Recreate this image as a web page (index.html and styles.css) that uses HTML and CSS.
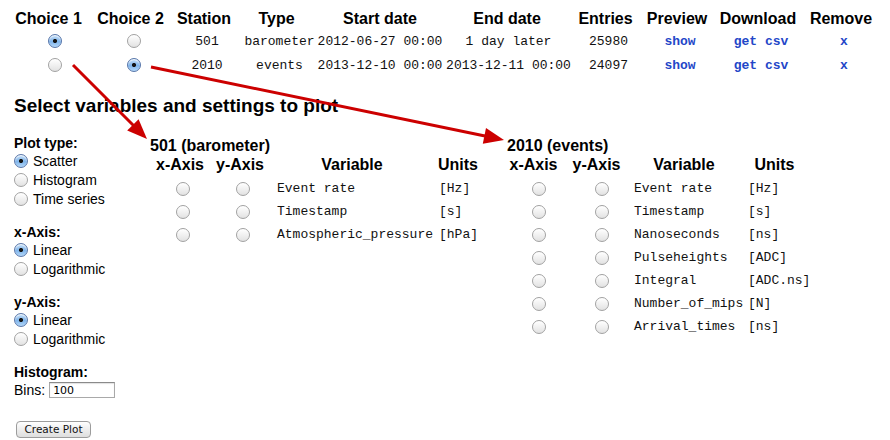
FILE: index.html
```html
<!DOCTYPE html>
<html>
<head>
<meta charset="utf-8">
<link rel="stylesheet" href="styles.css">
</head>
<body>
<table class="files">
  <colgroup>
    <col class="f1"><col class="f2"><col class="f3"><col class="f4"><col class="f5">
    <col class="f6"><col class="f7"><col class="f8"><col class="f9"><col class="f10">
  </colgroup>
  <thead>
    <tr><th>Choice 1</th><th>Choice 2</th><th>Station</th><th>Type</th><th>Start date</th><th>End date</th><th>Entries</th><th>Preview</th><th>Download</th><th>Remove</th></tr>
  </thead>
  <tbody>
    <tr>
      <td class="ch1"><input class="radio" type="radio" name="choice1" checked></td>
      <td class="ch2"><input class="radio" type="radio" name="choice2"></td>
      <td>501</td><td>barometer</td><td class="sd">2012-06-27 00:00</td><td class="ed">1 day later</td><td>25980</td>
      <td><a class="link" href="#">show</a></td><td><a class="link" href="#">get csv</a></td><td><a class="link" href="#">x</a></td>
    </tr>
    <tr>
      <td class="ch1"><input class="radio" type="radio" name="choice1"></td>
      <td class="ch2"><input class="radio" type="radio" name="choice2" checked></td>
      <td>2010</td><td>events</td><td class="sd">2013-12-10 00:00</td><td class="ed">2013-12-11 00:00</td><td>24097</td>
      <td><a class="link" href="#">show</a></td><td><a class="link" href="#">get csv</a></td><td><a class="link" href="#">x</a></td>
    </tr>
  </tbody>
</table>

<section class="plot">
  <h2 class="plot-title">Select variables and settings to plot</h2>
  <div class="plot-body">
    <div class="sidebar">
      <div class="group">
        <div class="gtitle">Plot type:</div>
        <label class="opt"><input class="radio" type="radio" name="pt" checked>Scatter</label>
        <label class="opt"><input class="radio" type="radio" name="pt">Histogram</label>
        <label class="opt"><input class="radio" type="radio" name="pt">Time series</label>
      </div>
      <div class="group">
        <div class="gtitle">x-Axis:</div>
        <label class="opt"><input class="radio" type="radio" name="xa" checked>Linear</label>
        <label class="opt"><input class="radio" type="radio" name="xa">Logarithmic</label>
      </div>
      <div class="group">
        <div class="gtitle">y-Axis:</div>
        <label class="opt"><input class="radio" type="radio" name="ya" checked>Linear</label>
        <label class="opt"><input class="radio" type="radio" name="ya">Logarithmic</label>
      </div>
      <div class="group last">
        <div class="gtitle">Histogram:</div>
        <label class="bins">Bins: <input class="bins-input" type="text" value="100"></label>
      </div>
      <button class="btn" type="button">Create Plot</button>
    </div>

    <div class="station baro">
      <div class="stitle">501 (barometer)</div>
      <table class="vars">
        <colgroup><col class="b1"><col class="b2"><col class="b3"><col class="b4"></colgroup>
        <thead><tr><th>x-Axis</th><th>y-Axis</th><th>Variable</th><th>Units</th></tr></thead>
        <tbody>
          <tr><td class="rc"><input class="radio" type="radio" name="bx"></td><td class="rc"><input class="radio" type="radio" name="by"></td><td class="var">Event rate</td><td class="unit">[Hz]</td></tr>
          <tr><td class="rc"><input class="radio" type="radio" name="bx"></td><td class="rc"><input class="radio" type="radio" name="by"></td><td class="var">Timestamp</td><td class="unit">[s]</td></tr>
          <tr><td class="rc"><input class="radio" type="radio" name="bx"></td><td class="rc"><input class="radio" type="radio" name="by"></td><td class="var">Atmospheric_pressure</td><td class="unit">[hPa]</td></tr>
        </tbody>
      </table>
    </div>

    <div class="station events">
      <div class="stitle">2010 (events)</div>
      <table class="vars">
        <colgroup><col class="e1"><col class="e2"><col class="e3"><col class="e4"></colgroup>
        <thead><tr><th>x-Axis</th><th>y-Axis</th><th>Variable</th><th>Units</th></tr></thead>
        <tbody>
          <tr><td class="rc"><input class="radio" type="radio" name="ex"></td><td class="rc"><input class="radio" type="radio" name="ey"></td><td class="var">Event rate</td><td class="unit">[Hz]</td></tr>
          <tr><td class="rc"><input class="radio" type="radio" name="ex"></td><td class="rc"><input class="radio" type="radio" name="ey"></td><td class="var">Timestamp</td><td class="unit">[s]</td></tr>
          <tr><td class="rc"><input class="radio" type="radio" name="ex"></td><td class="rc"><input class="radio" type="radio" name="ey"></td><td class="var">Nanoseconds</td><td class="unit">[ns]</td></tr>
          <tr><td class="rc"><input class="radio" type="radio" name="ex"></td><td class="rc"><input class="radio" type="radio" name="ey"></td><td class="var">Pulseheights</td><td class="unit">[ADC]</td></tr>
          <tr><td class="rc"><input class="radio" type="radio" name="ex"></td><td class="rc"><input class="radio" type="radio" name="ey"></td><td class="var">Integral</td><td class="unit">[ADC.ns]</td></tr>
          <tr><td class="rc"><input class="radio" type="radio" name="ex"></td><td class="rc"><input class="radio" type="radio" name="ey"></td><td class="var">Number_of_mips</td><td class="unit">[N]</td></tr>
          <tr><td class="rc"><input class="radio" type="radio" name="ex"></td><td class="rc"><input class="radio" type="radio" name="ey"></td><td class="var">Arrival_times</td><td class="unit">[ns]</td></tr>
        </tbody>
      </table>
    </div>
  </div>
</section>

<svg class="arrows" width="890" height="440" viewBox="0 0 890 440">
  <line x1="73" y1="65" x2="133.5" y2="125.5" stroke="#cc0000" stroke-width="3"/>
  <polygon points="147,139 127.2,130.6 138.6,119.2" fill="#cc0000"/>
  <line x1="151" y1="67" x2="485" y2="136" stroke="#cc0000" stroke-width="3"/>
  <polygon points="504,140 482.8,143.8 486,128.1" fill="#cc0000"/>
</svg>
</body>
</html>
```

FILE: styles.css
```css
html, body {
  margin: 0;
  padding: 0;
  background: #ffffff;
}

body {
  position: relative;
  width: 890px;
  height: 440px;
  overflow: hidden;
  padding: 8px;
  box-sizing: border-box;
  font-family: "Liberation Sans", Arial, sans-serif;
  color: #000;
}

/* ---------- top file table ---------- */
.files {
  border-collapse: collapse;
  border-spacing: 0;
  table-layout: fixed;
  width: 872px;
}
.f1 { width: 81px; }
.f2 { width: 83px; }
.f3 { width: 64px; }
.f4 { width: 81px; }
.f5 { width: 126px; }
.f6 { width: 128px; }
.f7 { width: 69px; }
.f8 { width: 74px; }
.f9 { width: 88px; }
.f10 { width: 78px; }

.files th {
  font-size: 16px;
  font-weight: bold;
  height: 21px;
  padding: 0;
  text-align: center;
  white-space: nowrap;
  vertical-align: middle;
}
.files td {
  height: 24px;
  padding: 0 0 0 6px;
  text-align: center;
  vertical-align: middle;
  white-space: nowrap;
  font-family: "Liberation Mono", "Courier New", monospace;
  font-size: 13px;
  color: #111;
}
.files td.ch1 { padding-left: 13px; }
.files td.ch2 { padding-left: 7px; }
.files td.sd { padding-left: 0; }
.files td.ed { padding-left: 3px; }

.link {
  color: #2346c8;
  font-weight: bold;
  text-decoration: none;
}

/* ---------- radios ---------- */
.radio {
  -webkit-appearance: none;
  appearance: none;
  box-sizing: border-box;
  width: 14px;
  height: 14px;
  margin: 0;
  border-radius: 50%;
  border: 1px solid #a2a2a2;
  background: linear-gradient(#ffffff, #e2e2e2);
  box-shadow: inset 0 1px 1px rgba(255, 255, 255, 0.9);
  flex: none;
}
.radio:checked {
  border-color: #5b78aa;
  background:
    radial-gradient(circle, #151515 0 1.7px, rgba(0, 0, 0, 0) 2.4px),
    linear-gradient(#c9e1f8, #7fb4ea 55%, #b4d8fa);
}
.files .radio,
.vars .radio {
  display: block;
  margin: 0 auto;
}

/* ---------- plot section ---------- */
.plot {
  padding-left: 6px;
}
.plot-title {
  margin: 18px 0 18px 0;
  font-size: 19px;
  line-height: 22px;
  font-weight: bold;
}
.plot-body {
  display: flex;
  align-items: flex-start;
}

.sidebar {
  width: 136px;
  flex: none;
  font-size: 14px;
}
.group {
  margin-bottom: 16px;
}
.group.last {
  margin-bottom: 0;
}
.gtitle {
  font-weight: bold;
  height: 16px;
  line-height: 16px;
}
.opt {
  display: flex;
  align-items: center;
  height: 19px;
  gap: 5px;
}
.bins {
  display: flex;
  align-items: center;
  height: 20px;
  gap: 4px;
}
.bins-input {
  box-sizing: border-box;
  width: 66px;
  height: 16px;
  margin: 0;
  padding: 0 3px;
  border: 1px solid #a9a9a9;
  border-top-color: #8a8a8a;
  box-shadow: inset 0 1px 1px rgba(0, 0, 0, 0.12);
  font-family: "DejaVu Sans", sans-serif;
  font-size: 11px;
  color: #000;
}
.btn {
  display: block;
  margin: 21px 0 0 2px;
  box-sizing: border-box;
  width: 75px;
  height: 17px;
  padding: 0;
  border: 1px solid #9c9c9c;
  border-radius: 4px;
  background: linear-gradient(#ffffff, #ececec 55%, #dedede);
  font-family: "DejaVu Sans", sans-serif;
  font-size: 10.5px;
  line-height: 15px;
  color: #111;
}

/* ---------- station variable tables ---------- */
.station {
  flex: none;
}
.station.baro { width: 357px; }
.stitle {
  font-size: 16px;
  font-weight: bold;
  height: 17px;
  line-height: 19px;
  margin-top: 1px;
}
.vars {
  border-collapse: collapse;
  border-spacing: 0;
  table-layout: fixed;
}
.baro .vars { width: 332px; }
.events .vars { width: 307px; }
.vars th {
  font-size: 16px;
  font-weight: bold;
  height: 24px;
  padding: 0;
  text-align: center;
  white-space: nowrap;
  vertical-align: middle;
}
.vars td {
  height: 23px;
  padding: 0;
  vertical-align: middle;
  white-space: nowrap;
  font-family: "Liberation Mono", "Courier New", monospace;
  font-size: 13px;
  color: #111;
}
.vars td.var,
.vars td.unit {
  text-align: left;
}

.b1 { width: 60px; }
.b2 { width: 60px; }
.b3 { width: 164px; }
.b4 { width: 48px; }
.baro td.rc { padding-left: 6px; }
.baro td.var { padding-left: 7px; }
.baro td.unit { padding-left: 5px; }

.e1 { width: 53px; }
.e2 { width: 73px; }
.e3 { width: 102px; }
.e4 { width: 79px; }
.events td.rc { padding-left: 10px; }
.events td.var { padding-left: 1px; }
.events td.unit { padding-left: 13px; }

/* ---------- annotation arrows (overlay) ---------- */
.arrows {
  position: absolute;
  top: 0;
  left: 0;
  pointer-events: none;
}
```
